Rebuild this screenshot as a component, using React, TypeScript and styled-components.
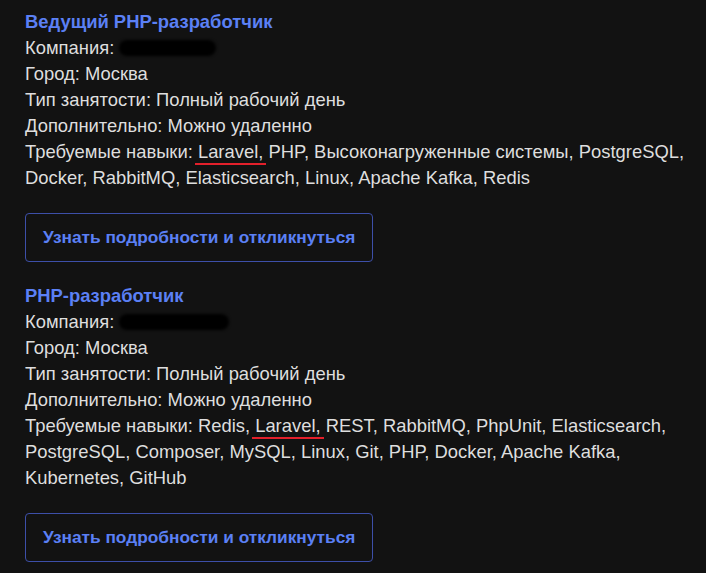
import React from "react";
import styled, { createGlobalStyle } from "styled-components";

const GlobalStyle = createGlobalStyle`
  html, body {
    margin: 0;
    padding: 0;
    background: #121212;
  }
  body {
    font-family: "Liberation Sans", Arial, sans-serif;
    color: #dedede;
  }
`;

const Page = styled.div`
  padding: 9px 14px 12px 25px;
  display: flex;
  flex-direction: column;
  gap: 21px;
`;

const Card = styled.section`
  display: flex;
  flex-direction: column;
  align-items: flex-start;
`;

const Title = styled.h2`
  margin: 0;
  font-size: 18.4px;
  line-height: 26px;
  font-weight: 700;
  color: #5b80f5;
`;

const Line = styled.div`
  font-size: 18.4px;
  line-height: 26px;
`;

const Hidden = styled.span<{ $w: number }>`
  display: inline-block;
  width: ${(p) => p.$w}px;
  height: 16px;
  vertical-align: -2px;
  background: #000;
  border-radius: 8px;
  filter: blur(1.5px);
`;

const Marked = styled.span`
  position: relative;
  &::after {
    content: "";
    position: absolute;
    left: 2px;
    right: -3px;
    bottom: -3px;
    height: 2px;
    background: #e3202b;
  }
`;

const Button = styled.button`
  margin-top: 22px;
  padding: 14px 17px;
  background: transparent;
  border: 1px solid #3d4fa8;
  border-radius: 4px;
  color: #5b80f5;
  font-family: inherit;
  font-size: 17.3px;
  line-height: 19px;
  font-weight: 700;
  cursor: pointer;
`;

type Vacancy = {
  title: string;
  hiddenWidth: number;
  before: string;
  after: string;
};

const vacancies: Vacancy[] = [
  {
    title: "Ведущий PHP-разработчик",
    hiddenWidth: 97,
    before: "",
    after:
      " PHP, Высоконагруженные системы, PostgreSQL, Docker, RabbitMQ, Elasticsearch, Linux, Apache Kafka, Redis",
  },
  {
    title: "PHP-разработчик",
    hiddenWidth: 110,
    before: " Redis,",
    after:
      " REST, RabbitMQ, PhpUnit, Elasticsearch, PostgreSQL, Composer, MySQL, Linux, Git, PHP, Docker, Apache Kafka, Kubernetes, GitHub",
  },
];

function App() {
  return (
    <>
      <GlobalStyle />
      <Page>
        {vacancies.map((v) => (
          <Card key={v.title}>
            <Title>{v.title}</Title>
            <Line>
              Компания: <Hidden $w={v.hiddenWidth} />
            </Line>
            <Line>Город: Москва</Line>
            <Line>Тип занятости: Полный рабочий день</Line>
            <Line>Дополнительно: Можно удаленно</Line>
            <Line>
              Требуемые навыки:{v.before}
              <Marked> Laravel,</Marked>
              {v.after}
            </Line>
            <Button>Узнать подробности и откликнуться</Button>
          </Card>
        ))}
      </Page>
    </>
  );
}

export default App;
